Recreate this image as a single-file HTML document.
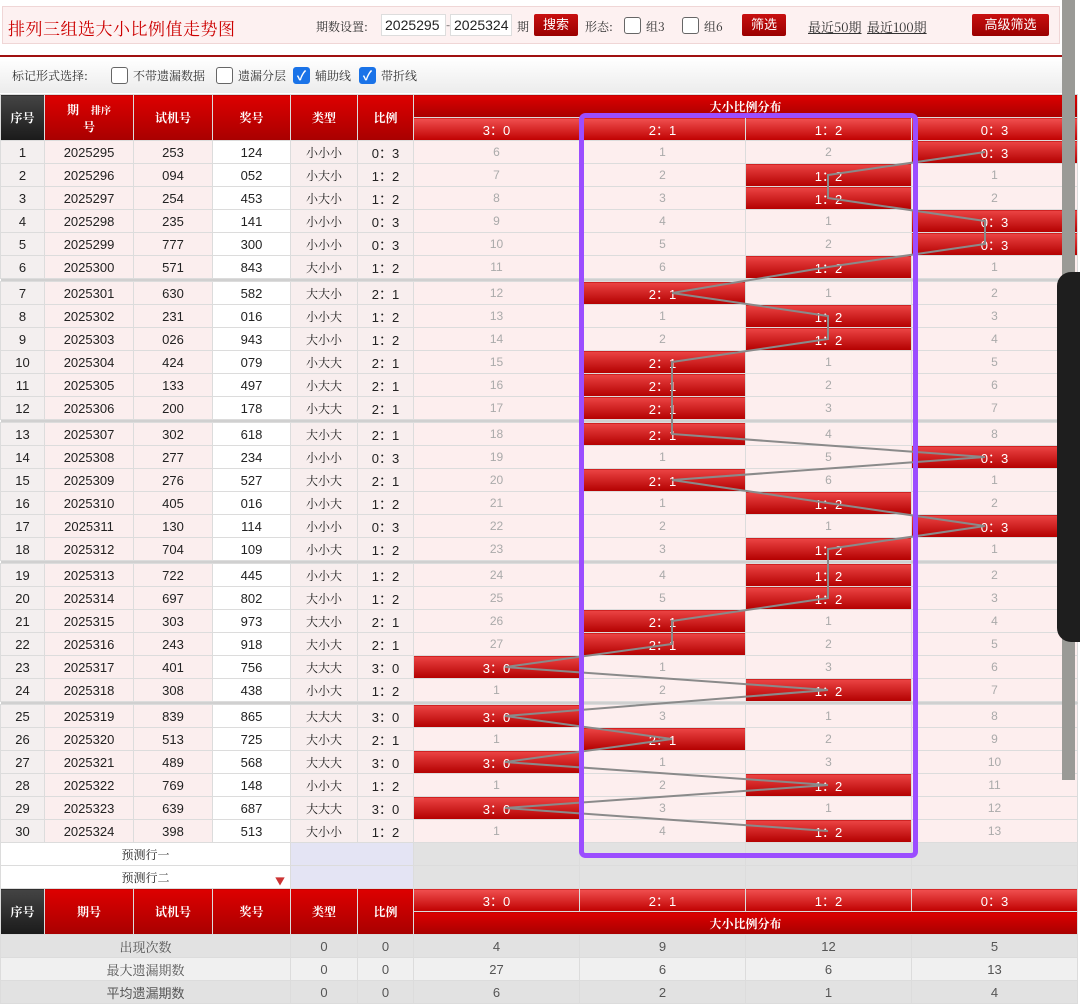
<!DOCTYPE html>
<html><head><meta charset="utf-8"><style>
*{margin:0;padding:0;box-sizing:border-box}
body{width:1080px;height:988px;overflow:hidden;background:#fff;font-family:"Liberation Sans","Noto Sans CJK SC",sans-serif;position:relative;font-size:13px;color:#222}
.top{position:absolute;left:2px;top:6px;width:1058px;height:38px;background:#fdf1f1;border:1px solid #f0d6d6}
.title{position:absolute;left:5px;top:8px;font-size:17px;color:#c00;font-family:"Noto Serif CJK SC",serif;letter-spacing:0.5px}
.lab{position:absolute;font-size:12px;color:#333;font-family:"Noto Serif CJK SC",serif}
.inp{position:absolute;top:7px;height:22px;background:#fff;border:1px solid #ddd;font-size:14px;padding:2px 3px;color:#222}
.btn{position:absolute;top:7px;height:22px;background:linear-gradient(#c81010,#9a0000);color:#fff;font-size:13px;text-align:center;line-height:22px;border-radius:2px}
.cb{position:absolute;width:17px;height:17px;border:1px solid #666;border-radius:3px;background:#fff}
.cb.on{background:#1a73e8;border-color:#1a73e8;color:#fff;font-size:13px;line-height:15px;text-align:center;font-weight:bold}
.lnk{position:absolute;top:10px;font-size:13px;text-decoration:underline;color:#333;font-family:"Noto Serif CJK SC",serif}
.rl{position:absolute;left:0;top:55px;width:1062px;height:2px;background:#a01010}
.mark{position:absolute;left:0;top:58px;width:1062px;height:35px;background:linear-gradient(#fff,#ececec)}
table{position:absolute;left:0;border-collapse:collapse;table-layout:fixed;width:1077px}
td{border:1px solid #dcdcdc;height:23px;padding:0;text-align:center;font-size:13px;white-space:nowrap;overflow:hidden}
tr.d td{background:#f3efef}
tr.d td:nth-child(2),tr.d td:nth-child(3){background:#fbeeee}
tr.d td:nth-child(4){background:#fff}
tr.d td:nth-child(5),tr.d td:nth-child(6){background:#f8eeee}
tr.d td:nth-child(5){font-family:"Noto Serif CJK SC",serif;font-size:12px}
tr.d td.m{background:#fdeeee;color:#aaa;font-size:12px}
tr.d td.r{background:linear-gradient(#ec4444,#b30000);color:#fff}
tr.s td{height:3px;background:#d0d0d0;border:0}
.h{background:linear-gradient(#d00,#a80000);color:#fff;font-weight:bold;font-family:"Noto Serif CJK SC",serif;font-size:12px}
.hd{background:linear-gradient(#444,#1a1a1a);color:#fff;font-weight:bold;font-family:"Noto Serif CJK SC",serif;font-size:12px}
.hr{background:linear-gradient(#f05050,#c00000);color:#fff}
.p td{background:#e2e2e2}
.p td.w{background:#fff;font-family:"Noto Serif CJK SC",serif;font-size:12px}
.p td.v{background:#e4e4f4}
.st td{background:#e2e2e2;color:#555}
.st2 td{background:#f0f0f0;color:#555}
.sb{position:absolute;left:1062px;top:0;width:13px;height:780px;background:#9a9a96}
.tab{position:absolute;left:1057px;top:272px;width:30px;height:370px;background:#1e1e1e;border-radius:14px 0 0 14px}
</style></head><body>
<div class="top">
<div class="title">排列三组选大小比例值走势图</div>
<div class="lab" style="left:313px;top:11px">期数设置:</div>
<div class="inp" style="left:378px;width:65px">2025295</div>
<div class="lab" style="left:443px;top:9px">-</div>
<div class="inp" style="left:447px;width:62px">2025324</div>
<div class="lab" style="left:514px;top:11px">期</div>
<div class="btn" style="left:531px;width:44px">搜索</div>
<div class="lab" style="left:582px;top:11px">形态:</div>
<div class="cb" style="left:621px;top:10px"></div>
<div class="lab" style="left:643px;top:11px">组3</div>
<div class="cb" style="left:679px;top:10px"></div>
<div class="lab" style="left:701px;top:11px">组6</div>
<div class="btn" style="left:739px;width:44px">筛选</div>
<div class="lnk" style="left:805px">最近50期</div>
<div class="lnk" style="left:864px">最近100期</div>
<div class="btn" style="left:969px;width:77px">高级筛选</div>
</div>
<div class="rl"></div>
<div class="mark">
<div class="lab" style="left:12px;top:9px">标记形式选择:</div>
<div class="cb" style="left:111px;top:9px"></div>
<div class="lab" style="left:133px;top:9px">不带遗漏数据</div>
<div class="cb" style="left:216px;top:9px"></div>
<div class="lab" style="left:238px;top:9px">遗漏分层</div>
<div class="cb on" style="left:293px;top:9px">✓</div>
<div class="lab" style="left:315px;top:9px">辅助线</div>
<div class="cb on" style="left:359px;top:9px">✓</div>
<div class="lab" style="left:381px;top:9px">带折线</div>
</div>
<table style="top:94px">
<colgroup><col style="width:44px"><col style="width:89px"><col style="width:79px"><col style="width:78px"><col style="width:67px"><col style="width:56px"><col style="width:166px"><col style="width:166px"><col style="width:166px"><col style="width:166px"></colgroup>
<tr><td class="hd" rowspan="2">序号</td><td class="h" rowspan="2">期&nbsp;&nbsp;&nbsp;&nbsp;<span style="font-size:10px">排序</span><br>号</td><td class="h" rowspan="2">试机号</td><td class="h" rowspan="2">奖号</td><td class="h" rowspan="2">类型</td><td class="h" rowspan="2">比例</td><td class="h" colspan="4" style="font-size:12px">大小比例分布</td></tr>
<tr><td class="hr">3：0</td><td class="hr">2：1</td><td class="hr">1：2</td><td class="hr">0：3</td></tr>
<tr class="d"><td>1</td><td>2025295</td><td>253</td><td>124</td><td>小小小</td><td>0：3</td><td class="m">6</td><td class="m">1</td><td class="m">2</td><td class="r">0：3</td></tr>
<tr class="d"><td>2</td><td>2025296</td><td>094</td><td>052</td><td>小大小</td><td>1：2</td><td class="m">7</td><td class="m">2</td><td class="r">1：2</td><td class="m">1</td></tr>
<tr class="d"><td>3</td><td>2025297</td><td>254</td><td>453</td><td>小大小</td><td>1：2</td><td class="m">8</td><td class="m">3</td><td class="r">1：2</td><td class="m">2</td></tr>
<tr class="d"><td>4</td><td>2025298</td><td>235</td><td>141</td><td>小小小</td><td>0：3</td><td class="m">9</td><td class="m">4</td><td class="m">1</td><td class="r">0：3</td></tr>
<tr class="d"><td>5</td><td>2025299</td><td>777</td><td>300</td><td>小小小</td><td>0：3</td><td class="m">10</td><td class="m">5</td><td class="m">2</td><td class="r">0：3</td></tr>
<tr class="d"><td>6</td><td>2025300</td><td>571</td><td>843</td><td>大小小</td><td>1：2</td><td class="m">11</td><td class="m">6</td><td class="r">1：2</td><td class="m">1</td></tr>
<tr class="s"><td colspan="10"></td></tr>
<tr class="d"><td>7</td><td>2025301</td><td>630</td><td>582</td><td>大大小</td><td>2：1</td><td class="m">12</td><td class="r">2：1</td><td class="m">1</td><td class="m">2</td></tr>
<tr class="d"><td>8</td><td>2025302</td><td>231</td><td>016</td><td>小小大</td><td>1：2</td><td class="m">13</td><td class="m">1</td><td class="r">1：2</td><td class="m">3</td></tr>
<tr class="d"><td>9</td><td>2025303</td><td>026</td><td>943</td><td>大小小</td><td>1：2</td><td class="m">14</td><td class="m">2</td><td class="r">1：2</td><td class="m">4</td></tr>
<tr class="d"><td>10</td><td>2025304</td><td>424</td><td>079</td><td>小大大</td><td>2：1</td><td class="m">15</td><td class="r">2：1</td><td class="m">1</td><td class="m">5</td></tr>
<tr class="d"><td>11</td><td>2025305</td><td>133</td><td>497</td><td>小大大</td><td>2：1</td><td class="m">16</td><td class="r">2：1</td><td class="m">2</td><td class="m">6</td></tr>
<tr class="d"><td>12</td><td>2025306</td><td>200</td><td>178</td><td>小大大</td><td>2：1</td><td class="m">17</td><td class="r">2：1</td><td class="m">3</td><td class="m">7</td></tr>
<tr class="s"><td colspan="10"></td></tr>
<tr class="d"><td>13</td><td>2025307</td><td>302</td><td>618</td><td>大小大</td><td>2：1</td><td class="m">18</td><td class="r">2：1</td><td class="m">4</td><td class="m">8</td></tr>
<tr class="d"><td>14</td><td>2025308</td><td>277</td><td>234</td><td>小小小</td><td>0：3</td><td class="m">19</td><td class="m">1</td><td class="m">5</td><td class="r">0：3</td></tr>
<tr class="d"><td>15</td><td>2025309</td><td>276</td><td>527</td><td>大小大</td><td>2：1</td><td class="m">20</td><td class="r">2：1</td><td class="m">6</td><td class="m">1</td></tr>
<tr class="d"><td>16</td><td>2025310</td><td>405</td><td>016</td><td>小小大</td><td>1：2</td><td class="m">21</td><td class="m">1</td><td class="r">1：2</td><td class="m">2</td></tr>
<tr class="d"><td>17</td><td>2025311</td><td>130</td><td>114</td><td>小小小</td><td>0：3</td><td class="m">22</td><td class="m">2</td><td class="m">1</td><td class="r">0：3</td></tr>
<tr class="d"><td>18</td><td>2025312</td><td>704</td><td>109</td><td>小小大</td><td>1：2</td><td class="m">23</td><td class="m">3</td><td class="r">1：2</td><td class="m">1</td></tr>
<tr class="s"><td colspan="10"></td></tr>
<tr class="d"><td>19</td><td>2025313</td><td>722</td><td>445</td><td>小小大</td><td>1：2</td><td class="m">24</td><td class="m">4</td><td class="r">1：2</td><td class="m">2</td></tr>
<tr class="d"><td>20</td><td>2025314</td><td>697</td><td>802</td><td>大小小</td><td>1：2</td><td class="m">25</td><td class="m">5</td><td class="r">1：2</td><td class="m">3</td></tr>
<tr class="d"><td>21</td><td>2025315</td><td>303</td><td>973</td><td>大大小</td><td>2：1</td><td class="m">26</td><td class="r">2：1</td><td class="m">1</td><td class="m">4</td></tr>
<tr class="d"><td>22</td><td>2025316</td><td>243</td><td>918</td><td>大小大</td><td>2：1</td><td class="m">27</td><td class="r">2：1</td><td class="m">2</td><td class="m">5</td></tr>
<tr class="d"><td>23</td><td>2025317</td><td>401</td><td>756</td><td>大大大</td><td>3：0</td><td class="r">3：0</td><td class="m">1</td><td class="m">3</td><td class="m">6</td></tr>
<tr class="d"><td>24</td><td>2025318</td><td>308</td><td>438</td><td>小小大</td><td>1：2</td><td class="m">1</td><td class="m">2</td><td class="r">1：2</td><td class="m">7</td></tr>
<tr class="s"><td colspan="10"></td></tr>
<tr class="d"><td>25</td><td>2025319</td><td>839</td><td>865</td><td>大大大</td><td>3：0</td><td class="r">3：0</td><td class="m">3</td><td class="m">1</td><td class="m">8</td></tr>
<tr class="d"><td>26</td><td>2025320</td><td>513</td><td>725</td><td>大小大</td><td>2：1</td><td class="m">1</td><td class="r">2：1</td><td class="m">2</td><td class="m">9</td></tr>
<tr class="d"><td>27</td><td>2025321</td><td>489</td><td>568</td><td>大大大</td><td>3：0</td><td class="r">3：0</td><td class="m">1</td><td class="m">3</td><td class="m">10</td></tr>
<tr class="d"><td>28</td><td>2025322</td><td>769</td><td>148</td><td>小小大</td><td>1：2</td><td class="m">1</td><td class="m">2</td><td class="r">1：2</td><td class="m">11</td></tr>
<tr class="d"><td>29</td><td>2025323</td><td>639</td><td>687</td><td>大大大</td><td>3：0</td><td class="r">3：0</td><td class="m">3</td><td class="m">1</td><td class="m">12</td></tr>
<tr class="d"><td>30</td><td>2025324</td><td>398</td><td>513</td><td>大小小</td><td>1：2</td><td class="m">1</td><td class="m">4</td><td class="r">1：2</td><td class="m">13</td></tr>
<tr class="p"><td class="w" colspan="4">预测行一</td><td class="v" colspan="2"></td><td></td><td></td><td></td><td></td></tr>
<tr class="p"><td class="w" colspan="4" style="position:relative">预测行二<span style="position:absolute;right:5px;bottom:0;color:#c33;font-size:10px">▼</span></td><td class="v" colspan="2"></td><td></td><td></td><td></td><td></td></tr>
<tr><td class="hd" rowspan="2">序号</td><td class="h" rowspan="2">期号</td><td class="h" rowspan="2">试机号</td><td class="h" rowspan="2">奖号</td><td class="h" rowspan="2">类型</td><td class="h" rowspan="2">比例</td><td class="hr">3：0</td><td class="hr">2：1</td><td class="hr">1：2</td><td class="hr">0：3</td></tr>
<tr><td class="h" colspan="4" style="font-size:12px">大小比例分布</td></tr>
<tr class="st"><td colspan="4" style="font-family:'Noto Serif CJK SC',serif">出现次数</td><td>0</td><td>0</td><td>4</td><td>9</td><td>12</td><td>5</td></tr>
<tr class="st2"><td colspan="4" style="font-family:'Noto Serif CJK SC',serif">最大遗漏期数</td><td>0</td><td>0</td><td>27</td><td>6</td><td>6</td><td>13</td></tr>
<tr class="st"><td colspan="4">平均遗漏期数</td><td>0</td><td>0</td><td>6</td><td>2</td><td>1</td><td>4</td></tr>
</table>
<svg style="position:absolute;left:0;top:0" width="1080" height="988">
<polyline fill="none" stroke="#8a8a8a" stroke-width="2" points="985,152 828,175 828,198 985,221 985,244 828,267 672,293 828,316 828,339 672,362 672,385 672,408 672,434 985,457 672,480 828,503 985,526 828,549 828,575 828,598 672,621 672,644 505,667 828,690 505,716 672,739 505,762 828,785 505,808 828,831"/>
<rect x="581.5" y="115.5" width="334" height="740" rx="4" fill="none" stroke="#9b4dff" stroke-width="5"/>
</svg>
<div class="sb"></div>
<div class="tab"></div>
</body></html>
